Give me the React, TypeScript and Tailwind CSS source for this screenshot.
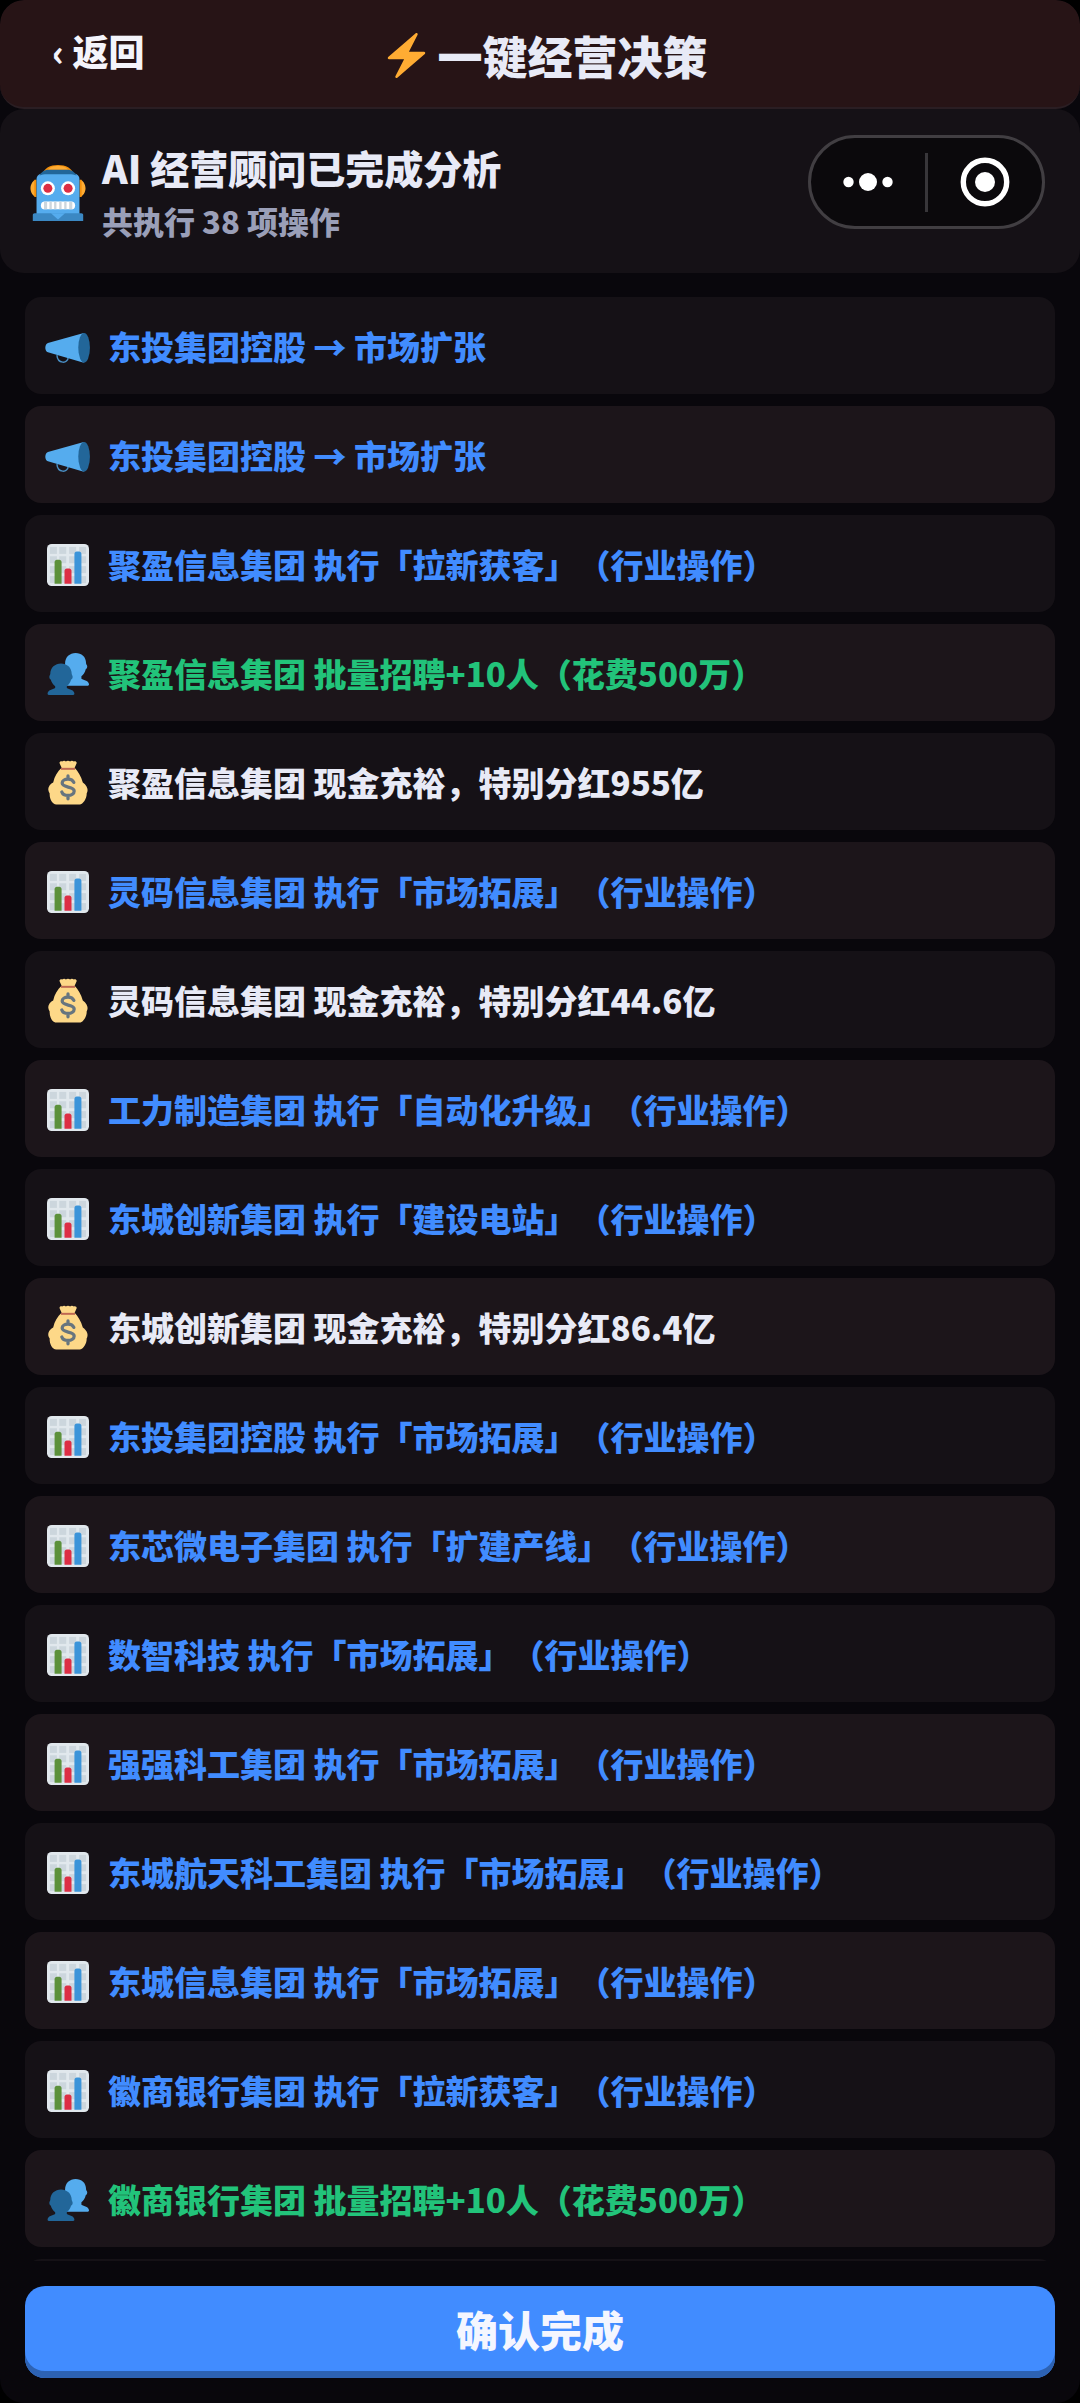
import React from 'react';

type LogKind = 'market' | 'industry' | 'hire' | 'dividend';

interface LogEntry {
  kind: LogKind;
  text: string;
}

const logs: LogEntry[] = [
  { kind: 'market', text: '东投集团控股 → 市场扩张' },
  { kind: 'market', text: '东投集团控股 → 市场扩张' },
  { kind: 'industry', text: '聚盈信息集团 执行「拉新获客」（行业操作）' },
  { kind: 'hire', text: '聚盈信息集团 批量招聘+10人（花费500万）' },
  { kind: 'dividend', text: '聚盈信息集团 现金充裕，特别分红955亿' },
  { kind: 'industry', text: '灵码信息集团 执行「市场拓展」（行业操作）' },
  { kind: 'dividend', text: '灵码信息集团 现金充裕，特别分红44.6亿' },
  { kind: 'industry', text: '工力制造集团 执行「自动化升级」（行业操作）' },
  { kind: 'industry', text: '东城创新集团 执行「建设电站」（行业操作）' },
  { kind: 'dividend', text: '东城创新集团 现金充裕，特别分红86.4亿' },
  { kind: 'industry', text: '东投集团控股 执行「市场拓展」（行业操作）' },
  { kind: 'industry', text: '东芯微电子集团 执行「扩建产线」（行业操作）' },
  { kind: 'industry', text: '数智科技 执行「市场拓展」（行业操作）' },
  { kind: 'industry', text: '强强科工集团 执行「市场拓展」（行业操作）' },
  { kind: 'industry', text: '东城航天科工集团 执行「市场拓展」（行业操作）' },
  { kind: 'industry', text: '东城信息集团 执行「市场拓展」（行业操作）' },
  { kind: 'industry', text: '徽商银行集团 执行「拉新获客」（行业操作）' },
  { kind: 'hire', text: '徽商银行集团 批量招聘+10人（花费500万）' },
];

const textColors: Record<LogKind, string> = {
  market: 'text-[#418cff]',
  industry: 'text-[#418cff]',
  hire: 'text-[#22c37a]',
  dividend: 'text-[#e8eaf6]',
};

function BoltIcon() {
  return (
    <svg viewBox="0 0 36 36" className="size-[45px] shrink-0" aria-hidden="true">
      <path
        fill="#FFAC33"
        d="M32.938 15.651C32.792 15.26 32.418 15 32 15H19.925L26.89 1.458c.219-.426.106-.947-.271-1.243C26.437.071 26.218 0 26 0c-.233 0-.466.082-.653.243L18 6.588 3.347 19.243c-.316.273-.43.714-.284 1.105S3.582 21 4 21h12.075L9.11 34.542c-.219.426-.106.947.271 1.243.182.144.401.215.619.215.233 0 .466-.082.653-.243L18 29.412l14.653-12.655c.317-.273.43-.714.285-1.106z"
      />
    </svg>
  );
}

function RobotIcon() {
  return (
    <svg viewBox="0 0 36 36" className="mt-1 size-14 shrink-0" aria-hidden="true">
      <path fill="#F4900C" d="M8 6C9 2 13 0 18 0s9 2 10 6z" />
      <path fill="#FFAC33" d="M11.500 3C13 1 15.500.6 18 .6s5 .4 6.500 2.400z" />
      <path fill="#FFAC33" d="M4 9.500C2 9.500.3 12.500.3 15S2 20.500 4 20.500z M32 9.500c2 0 3.700 3 3.700 5.500S34 20.500 32 20.500z" />
      <path fill="#F4900C" d="M4 9.500H2.800v11H4z M32 9.500h1.200v11H32z" />
      <path fill="#55ACEE" d="M4.200 32V9.500c0-2.500 1.500-4 4-4h19.600c2.500 0 4 1.500 4 4V32z" />
      <path fill="#226699" d="M6 6.800C7.500 4 9.500 3 12.500 3h11c3 0 5 1 6.500 3.800-1.500-.5-3-.8-5-.8H11c-2 0-3.500.3-5 .8z" />
      <circle cx="11.500" cy="15" r="4.500" fill="#fff" />
      <circle cx="24.500" cy="15" r="4.500" fill="#fff" />
      <circle cx="11.500" cy="15" r="2.900" fill="#DD2E44" />
      <circle cx="24.500" cy="15" r="2.900" fill="#DD2E44" />
      <rect x="7" y="23.500" width="22" height="5" rx="2.500" fill="#fff" />
      <path fill="#CCD6DD" d="M9 23.600h2v4.800H9z M12.500 23.500h1.500v5h-1.500z M15.500 23.500h1.500v5h-1.500z M18.800 23.500h1.500v5h-1.500z M22 23.500h1.500v5H22z M25.200 23.600h2v4.800h-2z" />
      <path fill="#3B88C3" d="M3 31h30c.7 0 1.200.5 1.200 1.200V36H1.800v-3.800C1.800 31.500 2.300 31 3 31z" />
      <path fill="#55ACEE" d="M13.500 31h9L18 35z" />
    </svg>
  );
}

function MegaphoneIcon() {
  return (
    <svg viewBox="0 0 36 36" className="size-[42px] shrink-0 overflow-visible" aria-hidden="true">
      <path fill="none" stroke="#55ACEE" strokeOpacity="0.8" strokeWidth="1.200" d="M8.500 25c.5 7.500 9.500 8 9.700 1.500" />
      <path fill="#55ACEE" d="M31.500 6 .8 14.500C-2.200 15.500-2.200 21.500.8 22.500L31.500 31.400z" />
      <ellipse cx="31.800" cy="18.700" rx="5" ry="12.700" fill="#226699" />
    </svg>
  );
}

function ChartIcon() {
  return (
    <svg viewBox="0 0 36 36" className="size-[42px] shrink-0" aria-hidden="true">
      <rect x="0" y="0" width="36" height="36" rx="4" fill="#E1E8ED" />
      <g fill="#CCD6DD">
        {[2.500, 10.500, 19, 27.500].map((y) =>
          [2.500, 10.500, 19, 27.500].map((x) => <rect key={`${x}-${y}`} x={x} y={y} width="6" height="6" />)
        )}
      </g>
      <path fill="#5C913B" d="M12.500 34h-6V15.500c0-1.100.9-2 2-2h2c1.100 0 2 .9 2 2z" />
      <path fill="#DD2E44" d="M21 34h-6V23c0-1.100.9-2 2-2h2c1.100 0 2 .9 2 2z" />
      <path fill="#3B94D9" d="M29.500 34h-6V8.500c0-1.100.9-2 2-2h2c1.100 0 2 .9 2 2z" />
    </svg>
  );
}

function PeopleIcon() {
  return (
    <svg viewBox="0 0 36 36" className="size-[42px] shrink-0" aria-hidden="true">
      <path
        fill="#55ACEE"
        d="M15.500 9C15.500 3.500 19.500 0 24.500 0s9 3 9 9c0 .8 1 1.500 1 2.500s-.6 2-1.200 2.200c-.8 3-2.200 5-3.800 6.300V22c2 1.200 6.500 1.500 6.500 5 0 .6-.4 1-1 1H14z"
      />
      <path
        fill="#226699"
        d="M2.800 18C2.800 12.500 7 9 12 9s9.200 3.500 9.200 9c0 .6.800 1.500.8 2.500s-.7 2-1.300 2.200c-.8 2.600-2.200 4.600-3.700 5.800v1.500c2 1.200 6.500 1.500 6.500 5 0 .6-.4 1-1 1h-21c-.6 0-1-.4-1-1 0-3.500 4.500-3.800 6.500-5v-1.500c-1.600-1.200-3-3.200-3.800-5.800-.6-.2-1.200-1.200-1.200-2.200s.8-1.900.8-2.500z"
      />
    </svg>
  );
}

function MoneyBagIcon() {
  return (
    <svg viewBox="0 0 36 36" className="size-[42px] shrink-0 overflow-visible" aria-hidden="true">
      <path
        fill="#FDD888"
        d="M12.500 5 10.800 1C10.500-.3 12 -.9 13-.4c.8-1 2.500-1 3.200 0 .9-1 2.700-1 3.600 0 .7-1 2.400-1 3.200 0 1-.6 2.700 0 2.400 1.400L23.700 5c3 3 5.500 7.500 7 12.500 4 3 5 6.500 3.300 9.500.3 4-3 9.500-6 9.500H8c-3.500 0-6-5-5.700-9.500-2.500-3.500-1-7.500 3-9.500C6.500 12.500 9 8 12.500 5z"
      />
      <path fill="#BF6952" d="M12 5h12v1.700H12z" />
      <path
        fill="none"
        stroke="#67757F"
        strokeWidth="2.800"
        strokeLinecap="round"
        d="M18 12v2.500 M18 29v2.500 M23 17.500c-.8-1.800-2.800-2.800-5-2.800-3 0-5 1.400-5 3.400 0 4.500 10.300 2.300 10.300 6.800 0 2.200-2.300 3.800-5.300 3.800-2.600 0-4.600-1-5.300-3"
      />
    </svg>
  );
}

const icons: Record<LogKind, () => React.JSX.Element> = {
  market: MegaphoneIcon,
  industry: ChartIcon,
  hire: PeopleIcon,
  dividend: MoneyBagIcon,
};

function LogRow({ entry }: { entry: LogEntry }) {
  const Icon = icons[entry.kind];
  return (
    <li className="flex h-[97px] shrink-0 items-center gap-[19px] rounded-2xl bg-[#151116] px-[22px] pt-0.5 even:bg-[#1c151a]">
      <Icon />
      <span className={`pb-0.5 text-[33px] leading-10 font-black ${textColors[entry.kind]}`}>{entry.text}</span>
    </li>
  );
}

function MiniProgramCapsule() {
  return (
    <div className="mb-[18px] flex h-[94px] w-[237px] items-center rounded-full border-3 border-[#413e42] bg-[#0b090c]">
      <button type="button" aria-label="更多" className="flex flex-1 items-center justify-center">
        <svg viewBox="0 0 50 20" className="h-5 w-[50px]" fill="#fff" aria-hidden="true">
          <circle cx="5.500" cy="10" r="5.200" />
          <circle cx="25" cy="10" r="9" />
          <circle cx="44.500" cy="10" r="5.200" />
        </svg>
      </button>
      <span className="h-[59px] w-[3px] bg-[#38363a]" />
      <button type="button" aria-label="关闭" className="flex flex-1 items-center justify-center">
        <svg viewBox="0 0 50 50" className="size-[50px]" aria-hidden="true">
          <circle cx="25" cy="25" r="21.700" fill="none" stroke="#fff" strokeWidth="5.400" />
          <circle cx="25" cy="25" r="10" fill="#fff" />
        </svg>
      </button>
    </div>
  );
}

export default function App() {
  return (
    <div className="h-screen bg-black font-['Noto_Sans_CJK_SC',sans-serif] [text-spacing-trim:space-all]">
      <div className="flex h-full flex-col overflow-hidden rounded-3xl bg-[#09070c]">
        <header className="grid h-[109px] shrink-0 grid-cols-[1fr_auto_1fr] items-center rounded-3xl border-b-2 border-[#2a1e23] bg-[#271416] pr-10 pl-[52px]">
          <button type="button" className="justify-self-start pb-2 text-[36px] leading-10 font-black text-[#f4f4fb]">
            ‹ 返回
          </button>
          <h1 className="flex items-center gap-2 pt-1 text-[45px] leading-[52px] font-black text-[#e8eaf6]">
            <BoltIcon />
            一键经营决策
          </h1>
        </header>

        <section className="flex h-[164px] shrink-0 items-center gap-4 rounded-3xl bg-[#151116] pr-[35px] pl-[30px]">
          <RobotIcon />
          <div className="flex-1 pt-1">
            <h2 className="text-[39px] leading-[56px] font-black text-[#e8eaf6]">AI 经营顾问已完成分析</h2>
            <p className="text-[31px] leading-[52px] font-black text-[#9a9fb8]">共执行 38 项操作</p>
          </div>
          <MiniProgramCapsule />
        </section>

        <ul className="flex min-h-0 flex-1 flex-col gap-3 overflow-y-auto px-[25px] pt-6 [scrollbar-width:none]">
          {logs.map((entry, index) => (
            <LogRow key={index} entry={entry} />
          ))}
          <li className="h-[97px] shrink-0 rounded-2xl bg-[#151116]" />
        </ul>

        <footer className="shrink-0 p-[25px]">
          <button
            type="button"
            className="h-[92px] w-full rounded-[20px] bg-[#418cff] pb-2 text-[42px] font-black text-[#f4f6ff] shadow-[inset_0_-7px_0_#2d62b3]"
          >
            确认完成
          </button>
        </footer>
      </div>
    </div>
  );
}
